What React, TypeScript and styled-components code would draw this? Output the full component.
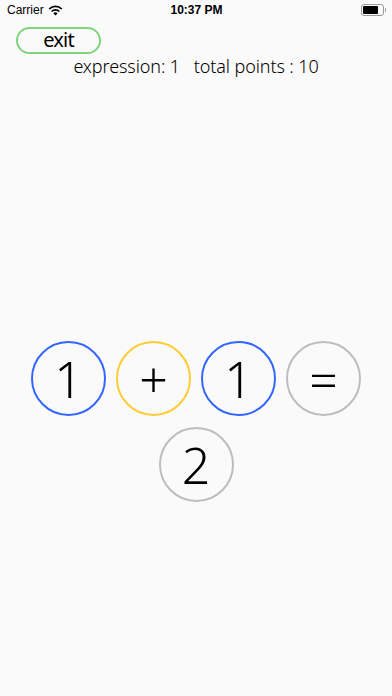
import styled, { createGlobalStyle } from "styled-components";

const GlobalStyle = createGlobalStyle`
  html, body {
    margin: 0;
    padding: 0;
    background: #fafafa;
  }
  body {
    font-family: "Noto Sans", "Noto Sans CJK KR", sans-serif;
    color: #000;
  }
`;

const Screen = styled.div`
  width: 392px;
  height: 696px;
  display: flex;
  flex-direction: column;
  background: #fafafa;
  overflow: hidden;
`;

const StatusBar = styled.div`
  height: 20px;
  display: grid;
  grid-template-columns: 1fr auto 1fr;
  align-items: center;
  padding: 0 6px 0 7px;
  font-family: "Liberation Sans", Arial, sans-serif;
  font-size: 12px;
  color: #000;
`;

const Carrier = styled.div`
  display: flex;
  align-items: center;
  gap: 4px;
`;

const Clock = styled.div`
  font-weight: 700;
`;

const Battery = styled.div`
  justify-self: end;
  display: flex;
  align-items: center;
  gap: 1px;
`;

const BatteryBody = styled.div`
  width: 19px;
  height: 8px;
  border: 1px solid #999;
  border-radius: 3px;
  padding: 1px;
  display: flex;
`;

const BatteryFill = styled.div`
  width: 80%;
  background: #000;
  border-radius: 1px;
`;

const BatteryNub = styled.div`
  width: 1.5px;
  height: 4px;
  background: #999;
  border-radius: 0 1px 1px 0;
`;

const Header = styled.div`
  padding: 7px 0 0 16px;
`;

const ExitButton = styled.button`
  width: 85px;
  height: 27px;
  border: 2px solid #7dd47d;
  border-radius: 14px;
  background: transparent;
  font-family: inherit;
  font-size: 20px;
  font-weight: 400;
  color: #000;
  padding: 0 0 2px;
  display: flex;
  align-items: center;
  justify-content: center;
  line-height: 1;
  letter-spacing: -0.8px;
`;

const Info = styled.div`
  text-align: center;
  white-space: pre;
  font-size: 18px;
  font-weight: 300;
  line-height: 24px;
  margin-top: 0;
  color: #000;
  letter-spacing: -0.1px;
`;

const Board = styled.div`
  margin-top: 263px;
  display: flex;
  flex-direction: column;
  align-items: center;
  gap: 11px;
`;

const Row = styled.div`
  display: flex;
  gap: 10px;
`;

const Bubble = styled.div<{ $tone: string }>`
  width: 75px;
  height: 75px;
  box-sizing: border-box;
  border-radius: 50%;
  border: 2px solid ${({ $tone }) => $tone};
  display: flex;
  align-items: center;
  justify-content: center;
  font-size: 50px;
  font-weight: 300;
  line-height: 1;
  color: #000;
`;

const BLUE = "#3366ff";
const YELLOW = "#ffcc33";
const GRAY = "#bdbdbd";

function Wifi() {
  return (
    <svg width="15" height="11" viewBox="0 0 15 11">
      <path d="M7.5 10.5 L5.3 8.2 A3.2 3.2 0 0 1 9.7 8.2 Z" fill="#000" />
      <path d="M3.6 6.5 A5.6 5.6 0 0 1 11.4 6.5" stroke="#000" strokeWidth="1.7" fill="none" />
      <path d="M1.2 4 A9 9 0 0 1 13.8 4" stroke="#000" strokeWidth="1.7" fill="none" />
    </svg>
  );
}

export default function App() {
  return (
    <Screen>
      <GlobalStyle />
      <StatusBar>
        <Carrier>
          Carrier <Wifi />
        </Carrier>
        <Clock>10:37 PM</Clock>
        <Battery>
          <BatteryBody>
            <BatteryFill />
          </BatteryBody>
          <BatteryNub />
        </Battery>
      </StatusBar>
      <Header>
        <ExitButton>exit</ExitButton>
      </Header>
      <Info>{"expression: 1   total points : 10"}</Info>
      <Board>
        <Row>
          <Bubble $tone={BLUE}>1</Bubble>
          <Bubble $tone={YELLOW}>+</Bubble>
          <Bubble $tone={BLUE}>1</Bubble>
          <Bubble $tone={GRAY}>=</Bubble>
        </Row>
        <Row>
          <Bubble $tone={GRAY}>2</Bubble>
        </Row>
      </Board>
    </Screen>
  );
}
